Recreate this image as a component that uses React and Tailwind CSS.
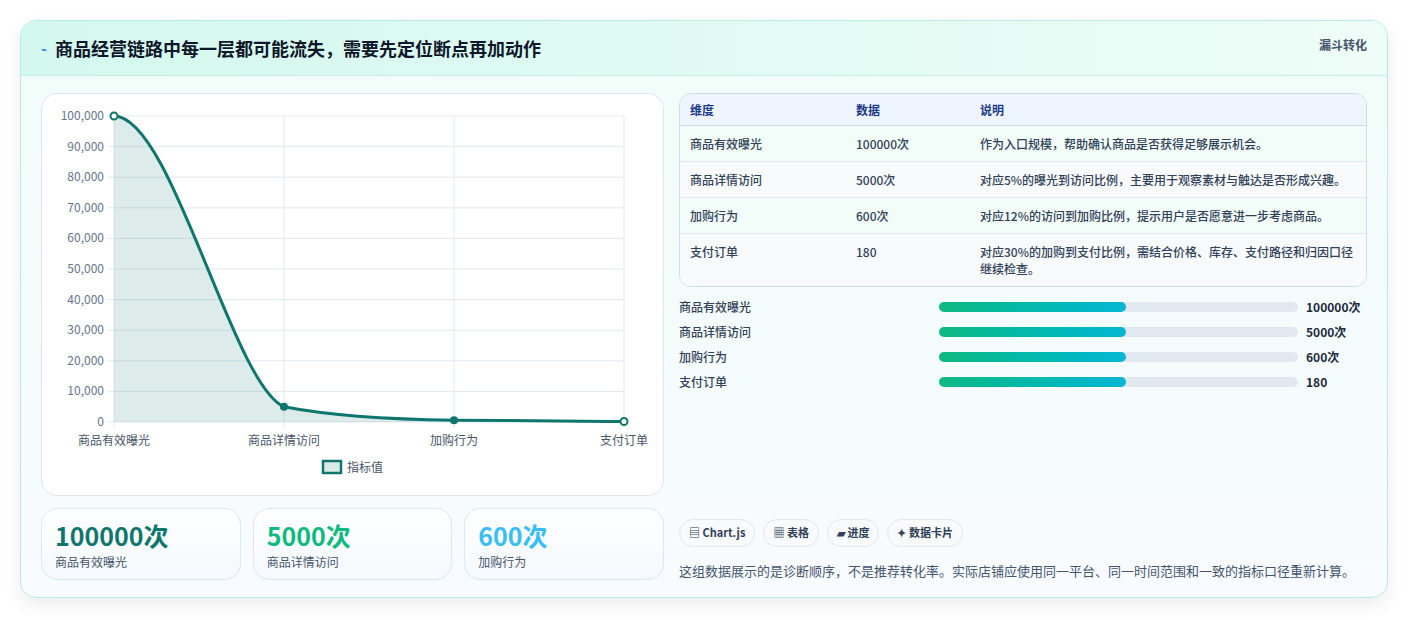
import React from 'react';

const rows = [
  { name: '商品有效曝光', value: '100000次', note: '作为入口规模，帮助确认商品是否获得足够展示机会。' },
  { name: '商品详情访问', value: '5000次', note: '对应5%的曝光到访问比例，主要用于观察素材与触达是否形成兴趣。' },
  { name: '加购行为', value: '600次', note: '对应12%的访问到加购比例，提示用户是否愿意进一步考虑商品。' },
  { name: '支付订单', value: '180', note: '对应30%的加购到支付比例，需结合价格、库存、支付路径和归因口径继续检查。' },
];

function Chart() {
  const top = 22, bottom = 328, left = 72, right = 582;
  const ticks = [100000, 90000, 80000, 70000, 60000, 50000, 40000, 30000, 20000, 10000, 0];
  const xs = [72, 242, 412, 582];
  const labels = ['商品有效曝光', '商品详情访问', '加购行为', '支付订单'];
  const y = (v) => bottom - (v / 100000) * (bottom - top);
  const line = `M72 22 C 130 22, 190 290, 242 ${y(5000)} C 290 322, 360 325.5, 412 ${y(600)} C 480 327, 530 327.4, 582 ${y(180)}`;
  return (
    <svg width="623" height="403" className="block" style={{ fontFamily: '"Noto Sans CJK SC", sans-serif' }}>
      {ticks.map((t) => (
        <g key={t}>
          <line x1={left - 6} x2={right} y1={y(t)} y2={y(t)} stroke="#e2e8f0" />
          <text x={left - 10} y={y(t) + 4} textAnchor="end" fontSize="12" fill="#64748b">{t.toLocaleString('en-US')}</text>
        </g>
      ))}
      {xs.map((x, i) => (
        <g key={x}>
          <line x1={x} x2={x} y1={top} y2={bottom + 6} stroke="#e2e8f0" />
          <text x={x} y={bottom + 23} textAnchor="middle" fontSize="12" fill="#475569">{labels[i]}</text>
        </g>
      ))}
      <path d={`${line} L582 ${bottom} L72 ${bottom} Z`} fill="#0f766e" fillOpacity="0.14" />
      <path d={line} fill="none" stroke="#0f766e" strokeWidth="3" />
      <circle cx="72" cy="22" r="3.5" fill="#fff" stroke="#0f766e" strokeWidth="2" />
      <circle cx="242" cy={y(5000)} r="4" fill="#0f766e" />
      <circle cx="412" cy={y(600)} r="4" fill="#0f766e" />
      <circle cx="582" cy={y(180)} r="3.5" fill="#fff" stroke="#0f766e" strokeWidth="2" />
      <rect x="281" y="367" width="18" height="12" fill="#dbeae8" stroke="#0f766e" strokeWidth="2.5" />
      <text x="305" y="378" fontSize="12" fill="#475569">指标值</text>
    </svg>
  );
}

export default function App() {
  return (
    <div className="w-[1408px] h-[620px] bg-white p-5 text-slate-800" style={{ fontFamily: '"Noto Sans CJK SC", sans-serif' }}>
      <div className="rounded-2xl border border-[#b9ece2] overflow-hidden shadow-[0_6px_18px_rgba(0,0,0,0.08)] bg-gradient-to-b from-[#f1fdf8] to-[#f8fbff]">
        <div className="h-[55px] flex items-center justify-between px-5 bg-gradient-to-r from-[#d3f8ee] to-[#eefdf8] border-b border-[#c7efe4]">
          <div className="flex items-center gap-2">
            <span className="text-[10px] text-blue-600">⌁</span>
            <h1 className="text-[18px] font-bold text-[#0f172a]">商品经营链路中每一层都可能流失，需要先定位断点再加动作</h1>
          </div>
          <span className="text-xs font-bold text-slate-600 self-start mt-4">漏斗转化</span>
        </div>
        <div className="flex gap-[15px] px-5 pt-[17px] pb-[17px]">
          <div className="w-[623px] flex flex-col gap-3">
            <div className="rounded-2xl border border-[#dde6ef] bg-white h-[403px]">
              <Chart />
            </div>
            <div className="grid grid-cols-3 gap-3">
              {[
                ['100000次', '商品有效曝光', 'text-[#0f766e]'],
                ['5000次', '商品详情访问', 'text-[#10b981]'],
                ['600次', '加购行为', 'text-[#38bdf8]'],
              ].map(([v, l, c]) => (
                <div key={l} className="h-[72px] rounded-2xl border border-[#dbe7f3] bg-gradient-to-b from-white to-[#f5f9fd] px-[13px] pt-[9px]">
                  <div className={`text-[25px] font-bold leading-[34px] ${c}`}>{v}</div>
                  <div className="text-xs text-slate-600 mt-0.5">{l}</div>
                </div>
              ))}
            </div>
          </div>
          <div className="flex-1 flex flex-col">
            <div className="rounded-xl border border-[#cfdbe6] overflow-hidden bg-white text-xs">
              <div className="grid grid-cols-[166px_124px_1fr] h-8 items-center px-[10px] bg-[#eef5fe] border-b border-[#cfdbe6] font-bold text-[#1e3a8a]">
                <div>维度</div><div>数据</div><div>说明</div>
              </div>
              {rows.map((r, i) => (
                <div key={r.name} className={`grid grid-cols-[166px_124px_1fr] px-[10px] py-[9px] text-slate-700 font-medium leading-[17px] ${i < 3 ? 'border-b border-[#e2e8f0]' : ''} ${i % 2 ? 'bg-[#f8fafc]' : 'bg-[#f2fcf8]'}`}>
                  <div>{r.name}</div><div>{r.value}</div><div>{r.note}</div>
                </div>
              ))}
            </div>
            <div className="flex flex-col gap-[7px] mt-[11px]">
              {rows.map((r) => (
                <div key={r.name} className="flex items-center h-[18px] text-xs">
                  <div className="w-[260px] font-medium text-slate-700">{r.name}</div>
                  <div className="w-[359px] h-[10px] rounded-full bg-[#e2e8f0]">
                    <div className="w-[52%] h-full rounded-full bg-gradient-to-r from-[#10b981] to-[#06b6d4]" />
                  </div>
                  <div className="ml-2 font-bold text-slate-800">{r.value}</div>
                </div>
              ))}
            </div>
            <div className="mt-auto flex gap-2 mb-[14px]">
              {['▤ Chart.js', '▦ 表格', '▰ 进度', '✦ 数据卡片'].map((t) => (
                <span key={t} className="h-7 px-[9px] rounded-full border border-[#e2e8f0] bg-[#f8fafc] text-[11px] font-bold text-slate-700 flex items-center">{t}</span>
              ))}
            </div>
            <p className="text-[13px] text-slate-600">这组数据展示的是诊断顺序，不是推荐转化率。实际店铺应使用同一平台、同一时间范围和一致的指标口径重新计算。</p>
          </div>
        </div>
      </div>
    </div>
  );
}
